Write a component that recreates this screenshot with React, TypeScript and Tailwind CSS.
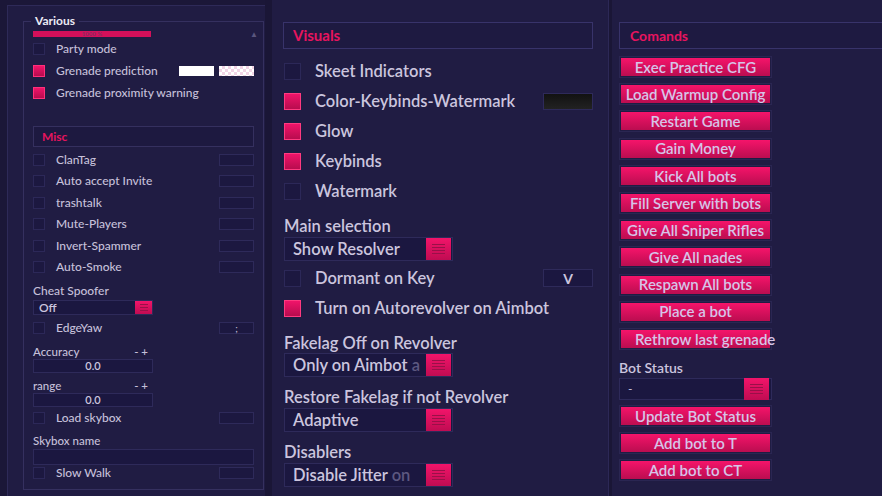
import React from 'react';

const font = { fontFamily: 'Lato, "Noto Sans", sans-serif' };

function SmallBox({ checked }: { checked?: boolean }) {
  return checked ? (
    <div className="w-[12px] h-[12px] border border-[#ff2f7a] bg-gradient-to-b from-[#f0146a] to-[#b80c4e]" />
  ) : (
    <div className="w-[12px] h-[12px] border border-[#2c2858] bg-[#1c1840]" />
  );
}

function BigBox({ checked }: { checked?: boolean }) {
  return checked ? (
    <div className="w-[17px] h-[17px] border border-[#ff3a80] bg-gradient-to-b from-[#f0146a] to-[#b80c4e]" />
  ) : (
    <div className="w-[17px] h-[17px] border border-[#2c2858] bg-[#1c1840]" />
  );
}

function KeyBox({ text }: { text?: string }) {
  return (
    <div className="w-[35px] h-[12px] border border-[#2e2a5a] bg-[#1c1840] flex items-center justify-center text-[10px] leading-none text-[#c9c3dc]">
      {text}
    </div>
  );
}

function LeftRow({ label, checked, h = 'h-[22px]', right }: { label: string; checked?: boolean; h?: string; right?: React.ReactNode }) {
  return (
    <div className={`${h} flex items-center`}>
      <SmallBox checked={checked} />
      <span className="ml-[11px] text-[12px] font-medium text-[#c6c0da] flex-1">{label}</span>
      {right}
    </div>
  );
}

function ListIcon({ size }: { size: 'lg' | 'sm' }) {
  const cls = size === 'lg' ? 'w-[25px] h-[22px]' : 'w-[17px] h-[13px]';
  const lw = size === 'lg' ? 'w-[13px]' : 'w-[8px]';
  return (
    <div className={`${cls} bg-gradient-to-b from-[#f2146a] to-[#c00c52] flex flex-col items-center justify-center gap-[2px]`}>
      <div className={`${lw} h-px bg-[#9a1048]`} />
      <div className={`${lw} h-px bg-[#9a1048]`} />
      <div className={`${lw} h-px bg-[#9a1048]`} />
      {size === 'lg' && <div className={`${lw} h-px bg-[#9a1048]`} />}
    </div>
  );
}

function Combo({ text, fade }: { text: string; fade?: string }) {
  return (
    <div className="w-[169px] h-[24px] border border-[#2e2a5a] bg-[#1b1740] flex items-center">
      <div className="flex-1 whitespace-nowrap pl-[8px] text-[16.5px] font-semibold text-[#cbc5de]">
        {text}
        {fade && <span className="text-[#5d5880]">{fade}</span>}
      </div>
      <div className="mr-px"><ListIcon size="lg" /></div>
    </div>
  );
}

function MidRow({ label, checked, right }: { label: string; checked?: boolean; right?: React.ReactNode }) {
  return (
    <div className="h-[30px] flex items-center">
      <BigBox checked={checked} />
      <span className="ml-[14px] flex-1 text-[16.5px] font-semibold text-[#cbc5de]">{label}</span>
      {right}
    </div>
  );
}

function MidLabel({ text }: { text: string }) {
  return (
    <div className="h-[30px] flex items-end">
      <span className="leading-[20px] text-[16.5px] font-semibold text-[#cbc5de]">{text}</span>
    </div>
  );
}

function Btn({ text, left }: { text: string; left?: boolean }) {
  return (
    <div className="h-[27.2px]">
      <div className="w-[153px] h-[22px] border border-[#2a2652] p-px">
        <div
          className={`w-[149px] h-[18px] bg-gradient-to-b from-[#f5146a] to-[#bb0d50] flex items-center whitespace-nowrap text-[15px] font-semibold text-[#d6c4e8] ${left ? 'pl-[14px]' : 'justify-center'}`}
        >
          {text}
        </div>
      </div>
    </div>
  );
}

export default function App() {
  const commands = [
    'Exec Practice CFG',
    'Load Warmup Config',
    'Restart Game',
    'Gain Money',
    'Kick All bots',
    'Fill Server with bots',
    'Give All Sniper Rifles',
    'Give All nades',
    'Respawn All bots',
    'Place a bot',
  ];

  return (
    <div className="w-[882px] h-[496px] overflow-hidden bg-[#1b1738] flex" style={font}>
      {/* left column */}
      <div className="w-[265px] h-full pl-[7px] pt-[5px]">
        <div className="h-full border-l border-t border-[#2e2a58] bg-[#201c43] pl-[15px] pt-[15px]">
          <div className="relative w-[241px] h-[469px] border border-[#35305f] px-[9px] pt-[9px]">
            <div className="absolute left-[7px] -top-[8px] bg-[#201c43] px-[4px] text-[12px] font-bold leading-[14px] text-[#ecebf4]">Various</div>
            <div className="absolute right-[5px] top-[6px] text-[8px] text-[#5a567e]">▲</div>
            <div className="w-[118px] h-[6px] bg-[#d4105a] flex justify-center items-center">
              <span className="text-[6px] leading-[6px] text-[#8a2a60] font-bold">1000 %</span>
            </div>
            <div className="h-px" />
            <LeftRow label="Party mode" />
            <LeftRow
              label="Grenade prediction"
              checked
              right={
                <div className="flex gap-[5px]">
                  <div className="w-[35px] h-[10px] bg-white" />
                  <div className="w-[35px] h-[10px] bg-[repeating-conic-gradient(#f2d4e6_0%_25%,#ffffff_0%_50%)] bg-[length:6px_6px]" />
                </div>
              }
            />
            <LeftRow label="Grenade proximity warning" checked />
            <div className="h-[22px]" />
            <div className="h-[21px] border border-[#35305f] bg-[#1d1940] flex items-center pl-[8px] text-[12px] font-bold text-[#e4145e]">Misc</div>
            <div className="h-[2px]" />
            {['ClanTag', 'Auto accept Invite', 'trashtalk', 'Mute-Players', 'Invert-Spammer', 'Auto-Smoke'].map((l) => (
              <LeftRow key={l} label={l} h="h-[21.5px]" right={<KeyBox />} />
            ))}
            <div className="h-[22px] pt-[4px] flex items-center text-[12px] font-medium text-[#c6c0da]">Cheat Spoofer</div>
            <div className="w-[120px] h-[15px] border border-[#2e2a5a] bg-[#1b1740] flex items-center">
              <span className="flex-1 pl-[5px] text-[12px] font-semibold text-[#cbc5de]">Off</span>
              <ListIcon size="sm" />
            </div>
            <div className="h-[2px]" />
            <LeftRow label="EdgeYaw" right={<KeyBox text=";" />} />
            <div className="w-[120px] h-[20px] flex items-end justify-between leading-[14px] text-[11.5px] font-medium text-[#c6c0da]">
              <span>Accuracy</span>
              <span className="pr-[5px]">- +</span>
            </div>
            <div className="w-[120px] h-[14px] border border-[#2e2a5a] bg-[#1b1740] flex items-center justify-center text-[11px] font-semibold text-[#cbc5de]">0.0</div>
            <div className="w-[120px] h-[20px] flex items-end justify-between leading-[14px] text-[11.5px] font-medium text-[#c6c0da]">
              <span>range</span>
              <span className="pr-[5px]">- +</span>
            </div>
            <div className="w-[120px] h-[14px] border border-[#2e2a5a] bg-[#1b1740] flex items-center justify-center text-[11px] font-semibold text-[#cbc5de]">0.0</div>
            <LeftRow label="Load skybox" h="h-[21px]" right={<KeyBox />} />
            <div className="h-[20px] flex items-end leading-[14px] text-[11.5px] font-medium text-[#c6c0da]">Skybox name</div>
            <div className="h-px" />
            <div className="h-[16px] border border-[#2e2a5a] bg-[#1b1740]" />
            <LeftRow label="Slow Walk" h="h-[16px]" right={<KeyBox />} />
          </div>
        </div>
      </div>

      {/* separator */}
      <div className="w-[7px] h-full bg-[#1a1636]" />

      {/* middle column */}
      <div className="w-[336px] h-full bg-[#201c43] pl-[11px] pr-[15px] pt-[22px]">
        <div className="h-[27px] border border-[#38336a] bg-[#1e1a41] flex items-center pl-[9px] text-[15px] font-bold text-[#e8145f]">Visuals</div>
        <div className="h-[7px]" />
        <div className="pl-px">
          <MidRow label="Skeet Indicators" />
          <MidRow
            label="Color-Keybinds-Watermark"
            checked
            right={<div className="w-[50px] h-[17px] border border-[#2e2a5a] bg-gradient-to-b from-[#121212] to-[#222222]" />}
          />
          <MidRow label="Glow" checked />
          <MidRow label="Keybinds" checked />
          <MidRow label="Watermark" />
          <MidLabel text="Main selection" />
          <div className="h-px" />
          <Combo text="Show Resolver" />
          <div className="h-[2px]" />
          <MidRow
            label="Dormant on Key"
            right={<div className="w-[50px] h-[18px] border border-[#2e2a5a] bg-[#1b1740] flex items-center justify-center text-[14px] font-bold text-[#cbc5de]">V</div>}
          />
          <MidRow label="Turn on Autorevolver on Aimbot" checked />
          <MidLabel text="Fakelag Off on Revolver" />
          <Combo text="Only on Aimbot " fade="a" />
          <MidLabel text="Restore Fakelag if not Revolver" />
          <div className="h-px" />
          <Combo text="Adaptive" />
          <MidLabel text="Disablers" />
          <div className="h-px" />
          <Combo text="Disable Jitter " fade="on" />
        </div>
      </div>

      {/* separator */}
      <div className="w-[4px] h-full bg-[#1a1636] border-l border-[#2c2856]" />

      {/* right column */}
      <div className="flex-1 h-full bg-[#201c43] pl-[7px] pt-[22px]">
        <div className="h-[27px] border-l border-t border-b border-[#38336a] bg-[#1e1a41] flex items-center pl-[10px] text-[14px] font-bold text-[#e8145f]">Comands</div>
        <div className="h-[7px]" />
        {commands.map((c) => (
          <Btn key={c} text={c} />
        ))}
        <Btn text="Rethrow last grenade" left />
        <div className="h-[22px] flex items-end leading-[18px] text-[14px] font-semibold text-[#cbc5de]">Bot Status</div>
        <div className="h-px" />
        <div className="w-[153px] h-[22px] border border-[#2e2a5a] bg-[#1b1740] flex items-center">
          <span className="flex-1 pl-[8px] text-[12px] text-[#cbc5de]">-</span>
          <div className="mr-[2px]"><ListIcon size="lg" /></div>
        </div>
        <div className="h-[5px]" />
        <Btn text="Update Bot Status" />
        <Btn text="Add bot to T" />
        <Btn text="Add bot to CT" />
      </div>
    </div>
  );
}
